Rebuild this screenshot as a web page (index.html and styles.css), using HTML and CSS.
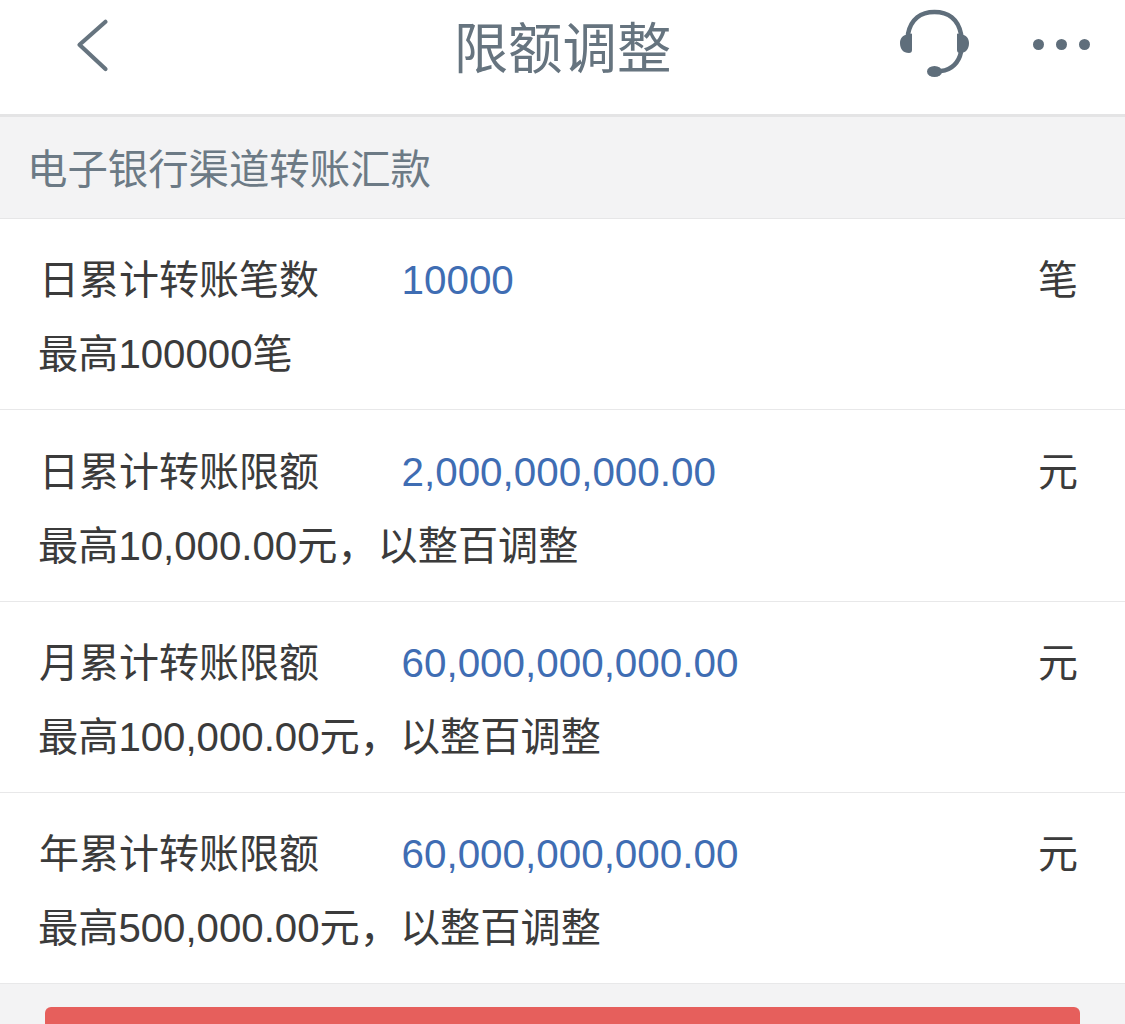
FILE: index.html
```html
<!DOCTYPE html>
<html lang="zh-CN">
<head>
<meta charset="utf-8">
<title>限额调整</title>
<link rel="stylesheet" href="styles.css">
</head>
<body>
<header class="topbar">
  <svg class="back" viewBox="0 0 36 56" width="36" height="56" aria-hidden="true"><path d="M31.5 4.8 L5.5 27.8 L31.5 52" fill="none" stroke="#66747f" stroke-width="4.2" stroke-linecap="round" stroke-linejoin="round"/></svg>
  <h1 class="title">限额调整</h1>
  <div class="actions">
    <svg class="headset" viewBox="0 0 72 72" width="72" height="72" aria-hidden="true">
      <path d="M9 26 C12 11 22 4 35.500 4 C49 4 59 11 62 26 L62 44 C60 54 53 62 42 63" fill="none" stroke="#5f6e7b" stroke-width="4.500" stroke-linecap="round"/>
      <path d="M13 26 L13 42 Q13 45 10 45 C4 45 1 41 1 35 C1 30 4 27 9 26 Q13 25 13 26 Z" fill="#5f6e7b"/>
      <path d="M58 26 L58 42 Q58 45 61 45 C67 45 70 41 70 35 C70 30 67 27 62 26 Q58 25 58 26 Z" fill="#5f6e7b"/>
      <ellipse cx="35.500" cy="63.500" rx="7.500" ry="5.500" fill="#5f6e7b"/>
    </svg>
    <div class="more"><span class="dot"></span><span class="dot"></span><span class="dot"></span></div>
  </div>
</header>
<div class="section">电子银行渠道转账汇款</div>
<main class="list">
  <section class="row">
    <div class="line"><span class="label">日累计转账笔数</span><span class="value">10000</span><span class="unit">笔</span></div>
    <div class="hint">最高100000笔</div>
  </section>
  <section class="row">
    <div class="line"><span class="label">日累计转账限额</span><span class="value">2,000,000,000.00</span><span class="unit">元</span></div>
    <div class="hint">最高10,000.00元，以整百调整</div>
  </section>
  <section class="row">
    <div class="line"><span class="label">月累计转账限额</span><span class="value">60,000,000,000.00</span><span class="unit">元</span></div>
    <div class="hint">最高100,000.00元，以整百调整</div>
  </section>
  <section class="row">
    <div class="line"><span class="label">年累计转账限额</span><span class="value">60,000,000,000.00</span><span class="unit">元</span></div>
    <div class="hint">最高500,000.00元，以整百调整</div>
  </section>
</main>
<div class="footer"><button class="submit" type="button"></button></div>
</body>
</html>
```

FILE: styles.css
```css
* { box-sizing: border-box; }
html, body { margin: 0; height: 1024px; overflow: hidden; }
body {
  background: #f3f3f4;
  font-family: "Liberation Sans", "Noto Sans CJK SC", sans-serif;
  font-size: 40px;
  color: #3b3b3b;
}
.topbar {
  position: relative;
  height: 117px;
  background: #fff;
  border-bottom: 3px solid #e4e4e5;
  display: flex;
  align-items: center;
  justify-content: center;
  padding-bottom: 20px;
}
.back { position: absolute; left: 74px; top: 17px; }
.title { margin: 0; font-size: 54.4px; font-weight: 400; line-height: 60px; color: #66747f; position: relative; top: 3px; }
.actions { position: absolute; left: 899px; top: 8px; width: 194px; display: flex; align-items: center; }
.more { display: flex; gap: 12px; margin-left: 62px; }
.dot { width: 11px; height: 11px; border-radius: 50%; background: #5f6e7b; }
.section {
  height: 101.75px;
  padding-left: 27px;
  font-size: 40.4px;
  line-height: 106px;
  color: #6c7a85;
  border-bottom: 1px solid #e6e6e7;
}
.list { background: #fff; }
.row {
  height: 191.4px;
  padding: 25.5px 47px 0 39px;
  border-bottom: 1px solid #e8e8e9;
}
.line { display: flex; height: 73px; line-height: 73px; }
.label { width: 362.500px; flex: none; }
.value { flex: 1; font-size: 40.4px; color: #3f6db3; }
.unit { flex: none; }
.hint { margin-left: -1px; font-size: 40.2px; line-height: 76px; }
.footer { padding: 22.5px 45px 0; }
.submit {
  display: block;
  width: 100%;
  height: 60px;
  border: 0;
  border-radius: 6px;
  background: #e65f5c;
}
```
